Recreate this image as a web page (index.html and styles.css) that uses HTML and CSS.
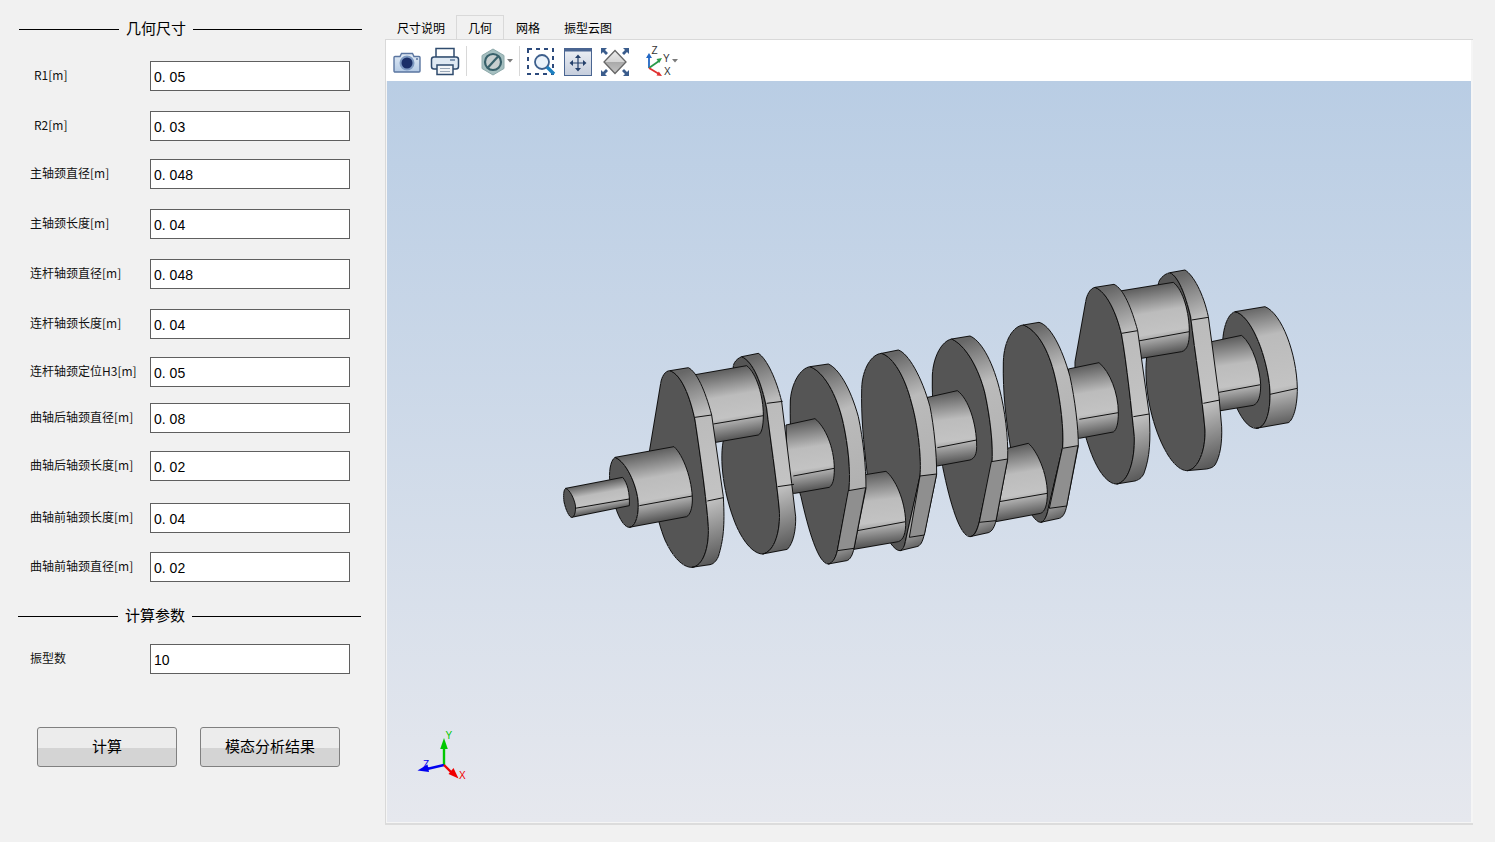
FILE: index.html
```html
<!DOCTYPE html>
<html lang="zh">
<head>
<meta charset="utf-8">
<title>曲轴模态分析</title>
<link rel="stylesheet" href="styles.css">
</head>
<body>
<div class="app">
  <aside class="side">
    <div class="group-title group-title-first"><span class="rule rule-short"></span><span class="group-name">几何尺寸</span><span class="rule"></span></div>
    <div class="form form-geometry">
      <div class="label label-indent">R1[m]</div><div class="field">0<span class="dot">.</span>05</div>
      <div class="label label-indent">R2[m]</div><div class="field">0<span class="dot">.</span>03</div>
      <div class="label">主轴颈直径[m]</div><div class="field">0<span class="dot">.</span>048</div>
      <div class="label">主轴颈长度[m]</div><div class="field">0<span class="dot">.</span>04</div>
      <div class="label">连杆轴颈直径[m]</div><div class="field">0<span class="dot">.</span>048</div>
      <div class="label">连杆轴颈长度[m]</div><div class="field">0<span class="dot">.</span>04</div>
      <div class="label">连杆轴颈定位H3[m]</div><div class="field">0<span class="dot">.</span>05</div>
      <div class="label">曲轴后轴颈直径[m]</div><div class="field">0<span class="dot">.</span>08</div>
      <div class="label">曲轴后轴颈长度[m]</div><div class="field">0<span class="dot">.</span>02</div>
      <div class="label">曲轴前轴颈长度[m]</div><div class="field">0<span class="dot">.</span>04</div>
      <div class="label">曲轴前轴颈直径[m]</div><div class="field">0<span class="dot">.</span>02</div>
    </div>
    <div class="group-title group-title-second"><span class="rule rule-short"></span><span class="group-name">计算参数</span><span class="rule"></span></div>
    <div class="form form-params">
      <div class="label">振型数</div><div class="field">10</div>
    </div>
    <div class="actions">
      <button class="btn" type="button">计算</button>
      <button class="btn" type="button">模态分析结果</button>
    </div>
  </aside>

  <main class="main">
    <nav class="tabs">
      <div class="tab">尺寸说明</div>
      <div class="tab tab-active">几何</div>
      <div class="tab">网格</div>
      <div class="tab">振型云图</div>
    </nav>
    <section class="pane">
      <div class="toolbar">
        <svg class="tool" viewBox="0 0 32 32">
          <defs><linearGradient id="camBody" x1="0" y1="0" x2="0" y2="1"><stop offset="0" stop-color="#e2ebf5"/><stop offset="1" stop-color="#b4cae5"/></linearGradient></defs>
          <path d="M4 10.500h5l1.500-3h11l1.500 3h5a1 1 0 0 1 1 1V25a1 1 0 0 1-1 1H4a1 1 0 0 1-1-1V11.500a1 1 0 0 1 1-1z" transform="translate(0 1)" fill="url(#camBody)" stroke="#5a75a0" stroke-width="1.400"/>
          <circle cx="16" cy="18" r="7.500" fill="#7e9ac2"/>
          <circle cx="16" cy="18" r="5.500" fill="#1b2f68"/>
          <circle cx="26" cy="14" r="1" fill="#5a75a0"/>
        </svg>
        <svg class="tool tool-gap" viewBox="0 0 32 32">
          <rect x="7" y="3.500" width="18" height="9" fill="#fff" stroke="#2f4b6e" stroke-width="1.500"/>
          <rect x="2.500" y="12" width="27" height="12" rx="2.500" fill="#dfe9f3" stroke="#2f4b6e" stroke-width="1.500"/>
          <rect x="21" y="14" width="5" height="2" fill="#8097b3"/>
          <rect x="8" y="20" width="16" height="9.500" fill="#f3f5f7" stroke="#2f4b6e" stroke-width="1.500"/>
          <path d="M11 23.500h10M11 26.500h10" stroke="#9aa8b8"/>
        </svg>
        <span class="sep sep-first"></span>
        <svg class="tool tool-hex" viewBox="0 0 32 32">
          <path d="M16 4l11 6.500v13L16 30 5 23.500v-13z" fill="#a5bfc0" stroke="#8eaaab"/>
          <circle cx="16" cy="17" r="8" fill="#c7cfcf" stroke="#37606a" stroke-width="2.200"/>
          <path d="M11 22.500L21 11.500" stroke="#37606a" stroke-width="2.200"/>
        </svg>
        <svg class="caret caret-hex" viewBox="0 0 6 4"><path d="M0 0h6L3 3.500z" fill="#7a7a7a"/></svg>
        <span class="sep sep-second"></span>
        <svg class="tool tool-zoom" viewBox="0 0 32 32">
          <rect x="4" y="4" width="25" height="25" fill="none" stroke="#2c4a7c" stroke-width="2" stroke-dasharray="4 4"/>
          <circle cx="18" cy="17" r="7" fill="#eaf2fa" stroke="#3d5f8c" stroke-width="1.800"/>
          <path d="M23 22l7 7" stroke="#1c7fc0" stroke-width="3.400"/>
        </svg>
        <svg class="tool tool-gap" viewBox="0 0 32 32">
          <defs><linearGradient id="fitBody" x1="0" y1="0" x2="0" y2="1"><stop offset="0" stop-color="#edf0f5"/><stop offset="1" stop-color="#c5cddc"/></linearGradient></defs>
          <rect x="2.500" y="3.500" width="27" height="27" fill="url(#fitBody)" stroke="#4a6591"/>
          <rect x="2.500" y="3.500" width="27" height="3" fill="#4a6591"/>
          <path d="M16 11v14M9 18h14" stroke="#25406b" stroke-width="1.200"/>
          <path d="M16 9.500l3 3.500h-6zM16 26.500l3-3.500h-6zM7.500 18l3.500-3v6zM24.500 18l-3.500-3v6z" fill="#25406b"/>
        </svg>
        <svg class="tool tool-fit" viewBox="0 0 32 32">
          <defs><linearGradient id="dia" x1="0" y1="0" x2="0" y2="1"><stop offset="0" stop-color="#ececec"/><stop offset=".5" stop-color="#d4d4d4"/><stop offset=".5" stop-color="#a8a8a8"/><stop offset="1" stop-color="#c4c4c4"/></linearGradient></defs>
          <path d="M16 5.500L27 17 16 28.500 5 17z" fill="url(#dia)" stroke="#666" stroke-width="1.300"/>
          <path d="M2 3h6L6 5l3 3-2 2-3-3-2 2zM30 3h-6l2 2-3 3 2 2 3-3 2 2zM2 31h6l-2-2 3-3-2-2-3 3-2-2zM30 31h-6l2-2-3-3 2-2 3 3 2-2z" fill="#3a5c8c"/>
        </svg>
        <svg class="tool tool-axis" viewBox="0 0 32 32">
          <path d="M6 23V13" stroke="#2267c4" stroke-width="1.800"/><path d="M6 8l-3 5h6z" fill="#2267c4"/>
          <path d="M6 23l10-7" stroke="#2a9a4a" stroke-width="1.800"/><path d="M19 13l-5.500 1 2.800 4z" fill="#2a9a4a"/>
          <path d="M6 23l10 6" stroke="#e03030" stroke-width="1.800"/><path d="M19 31l-5.500-.5 2.300-4z" fill="#e03030"/>
          <text x="8.500" y="9" class="axis-letter">Z</text>
          <text x="20" y="17" class="axis-letter">Y</text>
          <text x="21" y="30" class="axis-letter">X</text>
        </svg>
        <svg class="caret caret-axis" viewBox="0 0 6 4"><path d="M0 0h6L3 3.500z" fill="#7a7a7a"/></svg>
      </div>
      <div class="viewport">
        <svg class="scene" viewBox="387 81 1084 741">
          <defs>
            <linearGradient id="cyl"><stop offset="0" stop-color="#5e5e5e"/><stop offset=".38" stop-color="#bcbcbc"/><stop offset=".68" stop-color="#c3c3c3"/><stop offset="1" stop-color="#555"/></linearGradient>
            <linearGradient id="rimA" x1=".45" y1="0" x2=".55" y2="1"><stop offset="0" stop-color="#676767"/><stop offset=".24" stop-color="#bbb"/><stop offset=".68" stop-color="#c3c3c3"/><stop offset="1" stop-color="#5a5a5a"/></linearGradient>
            <linearGradient id="rimB" x1=".45" y1="0" x2=".55" y2="1"><stop offset="0" stop-color="#676767"/><stop offset=".24" stop-color="#bbb"/><stop offset=".9" stop-color="#aaa"/><stop offset="1" stop-color="#5a5a5a"/></linearGradient>
            <linearGradient id="c0" href="#cyl" gradientUnits="userSpaceOnUse" x1="130" y1="429" x2="146" y2="517"/>
            <linearGradient id="c1" href="#cyl" gradientUnits="userSpaceOnUse" x1="280" y1="336" x2="318" y2="545"/>
            <linearGradient id="c2" href="#cyl" gradientUnits="userSpaceOnUse" x1="515" y1="90" x2="550" y2="298"/>
            <linearGradient id="c3" href="#cyl" gradientUnits="userSpaceOnUse" x1="60" y1="246" x2="90" y2="452"/>
            <linearGradient id="c4" href="#cyl" gradientUnits="userSpaceOnUse" x1="285" y1="399" x2="310" y2="614"/>
            <linearGradient id="c5" href="#cyl" gradientUnits="userSpaceOnUse" x1="490" y1="160" x2="515" y2="370"/>
            <linearGradient id="c6" href="#cyl" gradientUnits="userSpaceOnUse" x1="295" y1="557" x2="330" y2="768"/>
            <linearGradient id="c7" href="#cyl" gradientUnits="userSpaceOnUse" x1="490" y1="318" x2="525" y2="528"/>
            <linearGradient id="c8" href="#cyl" gradientUnits="userSpaceOnUse" x1="680" y1="80" x2="715" y2="286"/>
            <linearGradient id="c9" href="#cyl" gradientUnits="userSpaceOnUse" x1="920" y1="235" x2="950" y2="444"/>
          </defs>

          <g class="crank" transform="translate(920 260) scale(.33333)">
            <path class="face" d="M945,155 C915,165 905,230 908,275 C915,370 960,505 1008,505 C1045,505 1055,430 1048,370 C1035,270 990,165 945,155Z"/>
            <path fill="url(#rimA)" d="M945,155 L1035,140 C1085,160 1130,280 1132,385 C1132,440 1120,480 1105,488 L1020,503 L1008,505 C1045,505 1055,430 1048,370 C1035,270 990,165 945,155Z"/>
            <path class="edge" d="M1050,403L1132,385"/>
            <path fill="url(#c9)" d="M860,248 L965,226 C1000,255 1020,330 1022,374 C1022,410 1015,430 1000,436 L903,452 L885,452Z"/>
            <path class="edge" d="M897,397L1022,374"/>

            <path class="face" d="M750,38 C730,42 716,60 715,72 L680,290 C670,380 695,490 730,560 C755,610 780,632 802,632 C835,628 857,570 855,510 C848,420 825,280 812,170 C795,100 775,50 750,38Z"/>
            <path fill="url(#rimA)" d="M750,38 L795,30 C820,45 850,100 865,170 L897,410 L905,500 C907,550 900,590 885,615 C880,622 870,625 860,627 L802,632 C835,628 857,570 855,510 C848,420 825,280 812,170 C795,100 775,50 750,38Z"/>
            <path class="edge" d="M815,180L865,172M850,430L900,420"/>
            <path fill="url(#c8)" d="M600,93 L760,67 C790,90 808,160 808,215 C808,250 802,270 785,275 L665,295 L650,297Z"/>
            <path class="edge" d="M655,243L808,215"/>

            <path class="face" d="M525,82 C510,85 500,105 497,125 L465,305 C462,400 485,500 510,570 C535,640 565,672 590,672 C625,668 645,600 643,530 C635,450 620,310 605,225 C590,160 560,95 525,82Z"/>
            <path fill="url(#rimA)" d="M525,82 L582,73 C610,85 635,145 653,212 L688,465 C692,540 690,590 672,640 C665,655 655,660 645,663 L590,672 C625,668 645,600 643,530 C635,450 620,310 605,225 C590,160 560,95 525,82Z"/>
            <path class="edge" d="M605,220L653,212M640,470L688,462"/>
            <path fill="url(#c7)" d="M445,327 L537,308 C570,335 595,400 595,458 C595,490 590,510 580,516 L478,535 L460,535Z"/>
            <path class="edge" d="M478,478L595,458"/>

            <path class="face" d="M310,195 C280,198 252,240 250,305 C248,400 258,480 272,565 C285,660 330,787 362,787 C372,787 378,775 385,745 L428,562 C432,510 422,420 405,350 C385,265 350,210 310,195Z"/>
            <path fill="url(#rimB)" d="M310,195 L357,187 C390,195 425,260 450,350 C465,420 475,500 475,558 L440,738 C436,760 428,772 418,775 L362,787 C372,785 381,770 385,745 L428,562 C432,510 422,420 405,350 C385,265 350,210 310,195Z"/>
            <path class="flat" d="M427,565L474,557L440,738L388,745Z"/>
            <path fill="url(#c6)" d="M262,565 L325,550 C350,570 382,640 382,700 C382,735 375,755 362,760 L228,785 L215,750Z"/>
            <path class="edge" d="M238,725L382,700"/>

            <path class="face" d="M95,237 C65,243 40,290 37,345 C35,440 45,540 68,620 C90,730 120,830 150,830 C160,830 170,815 178,785 L216,610 C220,560 212,480 195,400 C175,320 135,255 95,237Z"/>
            <path fill="url(#rimB)" d="M95,237 L150,228 C180,240 215,295 238,385 C255,450 265,530 263,597 L228,782 C224,800 216,815 205,818 L150,830 C165,828 172,810 178,785 L216,610 C220,560 212,480 195,400 C175,320 135,255 95,237Z"/>
            <path class="flat" d="M214,605L263,597L228,782L178,787Z"/>
          </g>

          <g class="crank" transform="translate(780 340) scale(.33333)">
            <path fill="url(#c5)" d="M430,175 L532,152 C565,175 590,250 590,320 C590,340 585,355 570,360 L472,378 L455,380Z"/>
            <path class="edge" d="M472,323L590,300"/>

            <path class="face" d="M305,40 C275,42 247,85 245,145 C243,230 250,300 262,405 C275,500 325,632 360,632 C368,632 372,625 376,605 L420,408 C425,360 415,260 395,190 C375,110 340,52 305,40Z"/>
            <path fill="url(#rimB)" d="M305,40 L355,30 C385,40 425,110 450,200 C462,260 470,340 470,402 L433,582 C428,605 422,618 410,620 L360,632 C368,630 374,618 376,605 L420,408 C425,360 415,260 395,190 C375,110 340,52 305,40Z"/>
            <path class="flat" d="M420,408L470,402L433,585L388,592Z"/>
            <path fill="url(#c4)" d="M250,405 L318,394 C345,415 375,480 377,545 C378,580 370,600 355,605 L222,628 L210,600Z"/>
            <path class="edge" d="M232,572L377,545"/>

            <path class="face" d="M90,80 C60,85 35,130 31,180 C28,290 40,400 63,470 C85,570 115,672 145,672 C155,672 165,660 172,632 L207,450 C212,390 205,320 190,250 C170,160 130,95 90,80Z"/>
            <path fill="url(#rimB)" d="M90,80 L145,72 C175,85 210,140 235,230 C250,300 258,380 258,445 L222,625 C218,645 210,660 200,662 L145,672 C160,668 168,650 172,632 L207,450 C212,390 205,320 190,250 C170,160 130,95 90,80Z"/>
            <path class="flat" d="M205,452L257,443L222,625L172,632Z"/>
            <path fill="url(#c3)" d="M18,255 L105,236 C135,260 162,320 163,385 C163,420 158,435 148,442 L45,460 L25,460Z"/>
            <path class="edge" d="M40,408L163,385"/>
          </g>

          <g class="crank" transform="translate(550 340) scale(.33333)">
            <path class="face" d="M575,50 C555,58 548,75 550,85 L520,300 C505,380 530,490 560,560 C590,625 620,642 638,642 C675,635 692,570 688,510 C680,420 660,290 650,205 C635,130 610,65 575,50Z"/>
            <path fill="url(#rimA)" d="M575,50 L625,40 C650,55 680,120 695,185 L725,430 L737,530 C738,570 730,610 712,628 L638,642 C675,635 692,570 688,510 C680,420 660,290 650,205 C635,130 610,65 575,50Z"/>
            <path class="edge" d="M650,190L698,184M683,440L732,433"/>
            <path fill="url(#c2)" d="M430,105 L590,77 C620,100 640,170 640,225 C640,260 635,280 625,285 L498,307 L480,310Z"/>
            <path class="edge" d="M490,252L640,227"/>

            <path class="face" d="M360,92 C345,92 335,110 332,130 L298,335 C295,420 320,540 345,600 C370,655 400,682 425,682 C460,680 478,620 475,560 C470,480 450,340 435,240 C420,170 395,105 360,92Z"/>
            <path fill="url(#rimA)" d="M360,92 L415,83 C440,95 465,150 485,225 L520,470 C525,560 520,600 505,650 C498,665 490,672 480,674 L425,682 C460,680 478,620 475,560 C470,480 450,340 435,240 C420,170 395,105 360,92Z"/>
            <path class="edge" d="M435,232L485,225M472,483L520,473"/>

            <path class="face" d="M195,352 C180,362 176,400 180,430 C190,500 215,562 238,562 C258,560 268,520 264,480 C258,430 228,365 195,352Z"/>
            <path fill="url(#c1)" d="M195,352 L372,320 C400,345 427,420 427,480 C427,505 420,525 410,530 L238,562 C258,560 268,520 264,480 C258,430 228,365 195,352Z"/>
            <path class="edge" d="M268,497L427,468"/>
            <path fill="url(#c0)" d="M47,445 L218,412 C232,428 240,460 238,497 L65,532Z"/>
            <path class="edge" d="M75,505L238,477"/>
            <path class="face" d="M47,445 C40,450 40,470 42,485 C47,510 58,532 65,532 C75,532 78,510 76,495 C72,475 60,450 47,445Z"/>
          </g>
        </svg>
        <svg class="triad" viewBox="0 0 65 60">
          <path d="M34 40V22" stroke="#00c800" stroke-width="2.400"/><path d="M34 13l-3.800 11h7.600z" fill="#00c800"/>
          <path d="M34 40L17 44" stroke="#0000f0" stroke-width="2.400"/><path d="M7.500 45.500l10-6 1.500 7.500z" fill="#0000f0"/>
          <path d="M34 40l8 8" stroke="#f00000" stroke-width="2.400"/><path d="M48.500 53.500l-10-4.500 5-6z" fill="#f00000"/>
          <text x="35.500" y="14" class="triad-y">Y</text>
          <text x="13" y="43" class="triad-z">Z</text>
          <text x="49" y="54" class="triad-x">X</text>
        </svg>
      </div>
    </section>
  </main>
</div>
</body>
</html>
```

FILE: styles.css
```css
* { box-sizing: border-box; }

html, body {
  margin: 0;
  padding: 0;
  height: 100%;
  overflow: hidden;
  background: #f1f1f1;
}

body {
  font-family: "Noto Sans CJK SC", "Liberation Sans", sans-serif;
  color: #000;
}

.app {
  display: flex;
  width: 1495px;
  height: 842px;
}

/* left column */
.side {
  flex: 0 0 385px;
  padding-top: 18px;
}

.group-title {
  display: flex;
  align-items: center;
  width: 343px;
  height: 22px;
  gap: 7px;
  font-size: 15px;
}

.group-title-first { margin-left: 19px; }
.group-title-second { margin-left: 18px; margin-top: 23px; }

.group-name {
  padding-bottom: 3px;
  line-height: 22px;
  white-space: nowrap;
}

.rule {
  flex: 1;
  height: 1px;
  margin-top: 1px;
  background: #000;
}

.rule-short { flex: 0 0 100px; }

.form {
  display: grid;
  grid-template-columns: 120px 200px;
  padding-left: 30px;
}

.form-geometry {
  margin-top: 21px;
  grid-template-rows: 50px 48px 50px 50px 50px 48px 46px 48px 52px 49px 30px;
}

.form-params {
  margin-top: 17px;
  grid-template-rows: 30px;
}

.label {
  font-size: 12px;
  line-height: 28px;
  color: #111;
  white-space: nowrap;
}

.label-indent { padding-left: 4px; }

.field {
  height: 30px;
  padding-left: 3px;
  border: 1px solid #5f5f5f;
  background: #fff;
  font-family: "Liberation Sans", sans-serif;
  font-size: 14px;
  line-height: 31px;
}

.dot {
  display: inline-block;
  width: 7.800px;
}

.actions {
  display: flex;
  gap: 23px;
  margin-top: 53px;
  padding-left: 37px;
}

.btn {
  width: 140px;
  height: 40px;
  padding: 0 0 4px;
  border: 1px solid #808080;
  border-radius: 3px;
  background: linear-gradient(#ececec 0, #ececec 53%, #d4d4d4 53%, #d4d4d4 100%);
  font-family: inherit;
  font-size: 15px;
  color: #000;
}

/* right column */
.main {
  flex: 0 0 1088px;
  padding-top: 15px;
}

.tabs {
  display: flex;
  height: 24px;
  font-size: 12px;
}

.tab {
  padding: 0 11px;
  border: 1px solid transparent;
  border-bottom: 0;
  line-height: 24px;
  white-space: nowrap;
}

.tab-active {
  margin-left: -1px;
  border-color: #d9d9d9;
}

.pane {
  width: 1088px;
  height: 786px;
  border-top: 1px solid #d9d9d9;
  border-left: 1px solid #d9d9d9;
  border-bottom: 2px solid #dcdcdc;
  background: #f5f5f5;
}

.toolbar {
  display: flex;
  align-items: center;
  width: 1085px;
  height: 41px;
  padding: 1px 0 0 5px;
  background: #fff;
}

.tool {
  flex: none;
  width: 32px;
  height: 32px;
}

.tool-gap { margin-left: 6px; }
.tool-hex { margin-left: 10px; }
.tool-zoom { margin-left: 4px; }
.tool-fit { margin-left: 5px; }
.tool-axis { margin-left: 12px; }

.sep {
  flex: none;
  width: 1px;
  height: 30px;
  background: #d8d8d8;
}

.sep-first { margin-left: 5px; }
.sep-second { margin-left: 6px; }

.caret {
  flex: none;
  width: 6px;
  height: 4px;
}

.caret-hex { margin-left: -2px; }
.caret-axis { margin-left: -3px; }

.axis-letter {
  font-family: "Liberation Sans", sans-serif;
  font-size: 10px;
  fill: #333;
}

.viewport {
  position: relative;
  width: 1084px;
  height: 741px;
  margin-left: 1px;
  background: linear-gradient(#b9cde4 0%, #e6e8ee 100%);
}

.scene {
  position: absolute;
  inset: 0;
  width: 1084px;
  height: 741px;
}

.crank path {
  stroke: #111;
  stroke-width: 3;
  stroke-linejoin: round;
  shape-rendering: crispEdges;
}

.crank .face { fill: #555; }
.crank .flat { fill: #8f8f8f; }
.crank .edge { fill: none; }

.triad {
  position: absolute;
  left: 23px;
  top: 644px;
  width: 65px;
  height: 60px;
}

.triad text {
  font-family: "Liberation Sans", sans-serif;
  font-size: 10px;
}

.triad-y { fill: #00c800; }
.triad-z { fill: #0000f0; }
.triad-x { fill: #f00000; }
```
